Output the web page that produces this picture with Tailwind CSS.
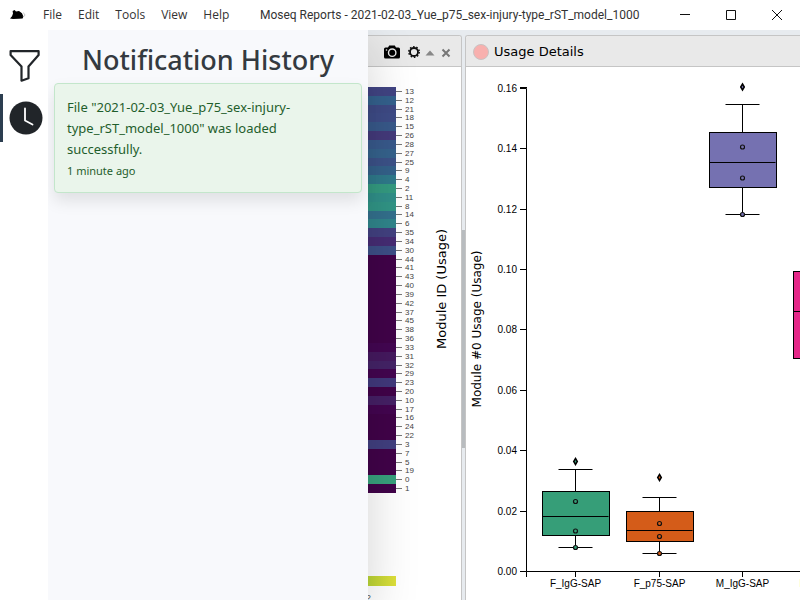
<!DOCTYPE html>
<html lang="en">
<head>
<meta charset="utf-8">
<title>Moseq Reports</title>
<script src="https://cdn.jsdelivr.net/npm/@tailwindcss/browser@4"></script>
</head>
<body class="h-screen flex flex-col overflow-hidden bg-white font-['Open_Sans','Noto_Sans',sans-serif] text-[#212529]">

<header class="h-[30px] shrink-0 flex items-center bg-white text-xs text-[#333]">
  <svg class="ml-[10px] mr-[9px] w-4 h-4 shrink-0" viewBox="0 0 16 16" aria-hidden="true">
    <path d="M0 11.6 L2 9.2 L3 6.6 L2.6 4 L4.6 3 L6 4.6 L9 4 L12 6.2 L13.4 9.4 L12.6 11.4 L9 11.8 L3 12 Z" fill="#000"/>
    <path d="M12.8 9.6 C14.8 10 15 8 14.4 6.6 M13 6 h.8" stroke="#aaa" stroke-width=".8" fill="none"/>
  </svg>
  <nav class="flex" aria-label="Application menu">
    <button type="button" class="px-2">File</button>
    <button type="button" class="px-2">Edit</button>
    <button type="button" class="px-2">Tools</button>
    <button type="button" class="px-2">View</button>
    <button type="button" class="px-2">Help</button>
  </nav>
  <h1 class="flex-1 min-w-0 text-center whitespace-nowrap overflow-hidden font-[Roboto,sans-serif]">Moseq Reports - 2021-02-03_Yue_p75_sex-injury-type_rST_model_1000</h1>
  <div class="flex shrink-0">
    <button type="button" aria-label="Minimize" class="w-[46px] h-[30px] grid place-items-center"><svg class="w-3 h-3" viewBox="0 0 12 12" stroke="#111" fill="none"><path d="M1 5.500h10"/></svg></button>
    <button type="button" aria-label="Maximize" class="w-[46px] h-[30px] grid place-items-center"><svg class="w-3 h-3" viewBox="0 0 12 12" stroke="#111" fill="none"><path d="M1.500 1.500h9v9h-9z"/></svg></button>
    <button type="button" aria-label="Close" class="w-[46px] h-[30px] grid place-items-center"><svg class="w-3 h-3" viewBox="0 0 12 12" stroke="#111" fill="none"><path d="M1 1l10 10M11 1L1 11"/></svg></button>
  </div>
</header>

<div class="flex-1 min-h-0 flex">
  <nav class="w-12 shrink-0 flex flex-col pt-4 bg-white" aria-label="Side bar">
    <button type="button" aria-label="Filters" class="h-12 pb-2 grid place-items-center border-l-[3px] border-transparent">
      <svg class="w-9 h-9" viewBox="0 0 36 36" fill="none" stroke="#212529" stroke-width="2.200" stroke-linejoin="round"><path d="M2.600 3.200h28v3.800L20.500 18.500v11.800l-7 2.400V18.500L2.600 7z"/></svg>
    </button>
    <button type="button" aria-label="Notification history" class="h-12 grid place-items-center border-l-[3px] border-[#2c3e50]">
      <svg class="w-[34px] h-[34px]" viewBox="0 0 34 34"><circle cx="17" cy="17" r="16.500" fill="#212529"/><path d="M16 7.500v12l7.500 4" fill="none" stroke="#fff" stroke-width="1.800" stroke-linecap="round" stroke-linejoin="round"/></svg>
    </button>
  </nav>

  <main class="relative flex-1 min-w-0 flex pt-[5px] bg-[#e7ebef] overflow-hidden font-['DejaVu_Sans',sans-serif]">
    <section class="w-[414px] shrink-0 flex flex-col bg-white border border-b-0 border-[#c5c5c5] rounded-t-[3px] overflow-hidden">
      <div class="h-[31px] shrink-0 flex items-center justify-end gap-1 pr-[9px] pt-px bg-[#e9e9e9] border-b border-[#c5c5c5]">
        <button type="button" aria-label="Save image" class="mr-1"><svg class="block w-4 h-4" viewBox="0 0 16 16"><path d="M1.500 3.500H4L5.200 1.500h5.600L12 3.500h2.500Q16 3.500 16 5v8q0 1.500-1.500 1.500h-13Q0 14.500 0 13V5q0-1.500 1.500-1.500z" fill="#000"/><circle cx="8.200" cy="8.700" r="3.700" fill="none" stroke="#e9e9e9" stroke-width="1.400"/><circle cx="2.500" cy="6" r=".8" fill="#e9e9e9"/></svg></button>
        <button type="button" aria-label="Settings"><svg class="block w-3 h-3" viewBox="0 0 12 12" fill="none" stroke="#111"><circle cx="6" cy="6" r="4" stroke-width="1.800"/><circle cx="6" cy="6" r="5.200" stroke-width="1.500" stroke-dasharray="1.600 1.670"/></svg></button>
        <button type="button" aria-label="Collapse"><svg class="block w-3 h-3" viewBox="0 0 12 12"><path d="M1.500 9.500L6 4.500l4.500 5z" fill="#888"/></svg></button>
        <button type="button" aria-label="Close panel"><svg class="block w-3 h-3" viewBox="0 0 12 12"><path d="M2.500 3.500l7 7M9.500 3.500l-7 7" stroke="#777" stroke-width="2"/></svg></button>
      </div>
      <svg id="heatmap" class="w-[412px] h-[533px] shrink-0" viewBox="49 67 412 533" role="img" aria-label="Module usage heatmap">
        <defs><linearGradient id="scale"><stop offset="0" stop-color="#440154"/><stop offset=".4" stop-color="#21918c"/><stop offset=".75" stop-color="#5ec962"/><stop offset=".92" stop-color="#bfd535"/><stop offset="1" stop-color="#dfe03a"/></linearGradient></defs>
        <rect x="96" y="576" width="300" height="10" fill="url(#scale)"/>
        <text x="371" y="601" text-anchor="end" font-size="9" fill="#555" font-family="Liberation Sans, sans-serif">0.12</text>
        <text transform="translate(446 289) rotate(-90)" text-anchor="middle" font-size="13" fill="#000">Module ID (Usage)</text>
      </svg>
    </section>

    <div class="w-[3px] shrink-0"><div class="mt-[195px] h-[218px] bg-[#b8bcbf]" role="separator" aria-orientation="vertical"></div></div>

    <section class="flex-1 min-w-0 flex flex-col bg-white border border-r-0 border-b-0 border-[#c5c5c5] rounded-tl-[3px] overflow-hidden">
      <div class="h-[31px] shrink-0 flex items-center gap-[5px] pl-[7px] pt-px bg-[#e9e9e9] border-b border-[#c5c5c5]">
        <span class="w-4 h-4 rounded-full bg-[#f8b0ae] border border-[#c9c2c2]"></span>
        <h2 class="text-[13px] text-black">Usage Details</h2>
      </div>
      <svg id="boxplot" class="w-[410px] h-[533px] shrink-0" viewBox="466 67 410 533" role="img" aria-label="Module usage by group">
        <text transform="translate(481 329) rotate(-90)" text-anchor="middle" font-size="12" fill="#000">Module #0 Usage (Usage)</text>
      </svg>
    </section>

    <aside class="absolute inset-y-0 left-0 w-80 px-[6px] pt-3 bg-[#f8f9fc] shadow-[0_16px_48px_rgba(0,0,0,0.175)] font-['Noto_Sans','Open_Sans',sans-serif]">
      <h2 class="text-[27px] leading-9 font-medium text-center text-[#343a40]">Notification History</h2>
      <article class="mt-[5px] px-3 pt-[13px] pb-[11px] rounded bg-[#eaf5eb] border border-[#c3e6cb] shadow-[0_8px_16px_rgba(0,0,0,0.1)] text-[#1f5e2c]">
        <p class="text-[13px] leading-[21px]">File "2021-02-03_Yue_p75_sex-injury-type_rST_model_1000" was loaded successfully.</p>
        <p class="text-[11px] leading-[21px]">1 minute ago</p>
      </article>
    </aside>
  </main>
</div>

<script>
const NS = 'http://www.w3.org/2000/svg';
function add(parent, tag, attrs, text) {
  const el = document.createElementNS(NS, tag);
  for (const k in attrs) el.setAttribute(k, attrs[k]);
  if (text !== undefined) el.textContent = text;
  parent.appendChild(el);
  return el;
}
const labelFont = 'Liberation Sans, sans-serif';

// Heatmap: one row per module, sorted by usage
const modules = [
  [13,'#414483'],[12,'#34618d'],[21,'#3e4a85'],[18,'#3e4c87'],[15,'#38598a'],[26,'#443a7b'],[28,'#38598b'],[27,'#35628c'],
  [25,'#3c5288'],[9,'#34618a'],[4,'#2f7a8b'],[2,'#349b81'],[11,'#309089'],[8,'#319586'],[14,'#33708d'],[6,'#30858b'],
  [35,'#424180'],[34,'#462c74'],[30,'#3d4f87'],[44],[41],[43],[40],[39],[42],[37],[45],[38],[36],[33,'#430652'],
  [31,'#45195f'],[32,'#442367'],[29,'#430550'],[23,'#41397c'],[20],[10,'#452065'],[17,'#430550'],[16],[24],[22],
  [3,'#413f7f'],[7],[5],[19],[0,'#38a17d'],[1]
];
const heat = document.getElementById('heatmap');
const rowH = 406 / modules.length;
modules.forEach(([id, color], i) => {
  const top = Math.round(87 + i * rowH), bottom = Math.round(87 + (i + 1) * rowH);
  add(heat, 'rect', {x: 96, y: top, width: 300, height: bottom - top, fill: color || '#410349'});
  const mid = Math.floor((87 + (i + .5) * rowH)) + .5;
  add(heat, 'path', {d: `M396 ${mid}h6`, stroke: '#777'});
  add(heat, 'text', {x: 405, y: mid + 2.5, 'font-size': 8, fill: '#444', 'font-family': labelFont}, id);
});

// Box plot
const plot = document.getElementById('boxplot');
add(plot, 'path', {d: 'M520 88.500H526.500V571.500H520M526.500 577V571.500H868', fill: 'none', stroke: '#000'});
add(plot, 'path', {d: 'M520 87.500h7', stroke: '#000'});
for (let i = 0; i <= 8; i++) {
  const y = Math.round(571 - i * 60.4) + .5;
  add(plot, 'path', {d: `M520 ${y}h6`, stroke: '#000'});
  add(plot, 'text', {x: 517, y: y + 3.5, 'text-anchor': 'end', 'font-size': 10, fill: '#000', 'font-family': labelFont}, (i * .02).toFixed(2));
}
const groups = [
  {name: 'F_IgG-SAP', x: 575.5, color: '#369e78', q: [491.5, 516.5, 535.5], w: [469.5, 547.5], pts: [501.5, 531, 547.5], out: 461.5},
  {name: 'F_p75-SAP', x: 659, color: '#d45c19', q: [511.5, 530.5, 541.5], w: [497.5, 553.5], pts: [523.5, 536.5, 553.5], out: 477.5},
  {name: 'M_IgG-SAP', x: 742.5, color: '#7571b1', q: [132.5, 162.5, 187.5], w: [104.5, 214.5], pts: [147, 178, 214.5], out: 87},
  {name: 'M_p75-SAP', x: 826, color: '#e52889', q: [271.5, 311.5, 358.5], w: [230.5, 400.5], pts: [290, 335, 400.5], out: 210}
];
for (const g of groups) {
  const c = Math.floor(g.x) + .5;
  add(plot, 'path', {d: `M${c} ${g.w[0]}V${g.w[1]}M${c - 17} ${g.w[0]}h34M${c - 17} ${g.w[1]}h34M${c} 572v5`, stroke: '#000'});
  add(plot, 'rect', {x: Math.round(c - 34) + .5, y: g.q[0], width: 67, height: g.q[2] - g.q[0], fill: g.color, stroke: '#000'});
  add(plot, 'path', {d: `M${c - 33} ${g.q[1]}h66`, stroke: '#000'});
  g.pts.forEach(y => add(plot, 'circle', {cx: c, cy: y, r: 2, fill: g.color, stroke: '#111', 'stroke-width': 1.2}));
  add(plot, 'path', {d: `M${c} ${g.out - 3}l1.800 3l-1.800 3l-1.800-3z`, fill: g.color, stroke: '#000', 'stroke-width': 1.5});
  add(plot, 'text', {x: c, y: 587, 'text-anchor': 'middle', 'font-size': 10, fill: '#000', 'font-family': labelFont}, g.name);
}
</script>
</body>
</html>
